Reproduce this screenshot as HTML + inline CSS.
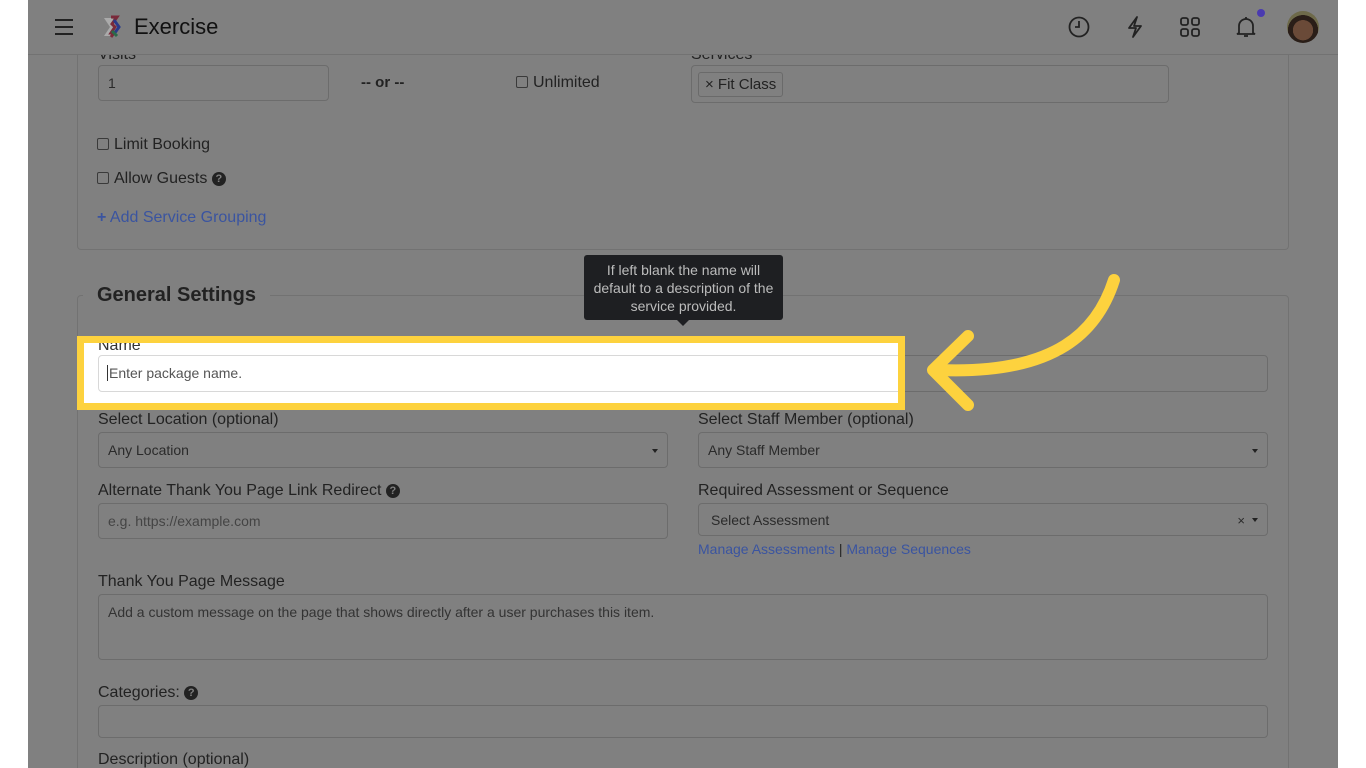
<!DOCTYPE html>
<html><head><style>
*{margin:0;padding:0;box-sizing:border-box}
body{width:1366px;height:768px;background:#fff;position:relative;overflow:hidden;font-family:"Liberation Sans",sans-serif;color:#262626}
.pg{position:absolute;left:28px;top:0;width:1310px;height:768px;background:#808080;overflow:hidden}
.a{position:absolute}
.lbl{position:absolute;font-size:16px;color:#222}
.in{position:absolute;border:1px solid #6c6c6c;border-radius:4px;font-size:14px;color:#2a2a2a;padding-left:9px;display:flex;align-items:center}
.lnk{color:#3a54a0}
.chk{display:inline-block;width:12px;height:12px;border:1px solid #3a3a3a;border-radius:2px;vertical-align:-1px;margin-right:5px}
.q{display:inline-block;width:14px;height:14px;border-radius:50%;background:#222;color:#808080;font-size:11px;font-weight:bold;text-align:center;line-height:14px;vertical-align:1px}
.car{position:absolute;right:9px;top:16px;border-left:3px solid transparent;border-right:3px solid transparent;border-top:4px solid #222}
</style></head><body>
<div class="pg">
 <!-- top panel -->
 <div class="a" style="left:49px;top:30px;width:1212px;height:220px;border:1px solid #727272;border-top:none;border-radius:0 0 4px 4px"></div>
 <div class="lbl" style="left:70px;top:46px">Visits</div>
 <div class="in" style="left:70px;top:65px;width:231px;height:36px">1</div>
 <div class="a" style="left:333px;top:74px;font-size:15px;font-weight:bold;color:#222">-- or --</div>
 <div class="lbl" style="left:488px;top:74px"><span class="chk"></span>Unlimited</div>
 <div class="lbl" style="left:663px;top:46px">Services</div>
 <div class="in" style="left:663px;top:65px;width:478px;height:38px;padding-left:6px"><span style="border:1px solid #6a6a6a;border-radius:3px;padding:3px 6px;font-size:15px;color:#222">× Fit Class</span></div>
 <div class="lbl" style="left:69px;top:136px"><span class="chk"></span>Limit Booking</div>
 <div class="lbl" style="left:69px;top:170px"><span class="chk"></span>Allow Guests <span class="q">?</span></div>
 <div class="lbl lnk" style="left:69px;top:209px"><b>+</b> Add Service Grouping</div>

 <!-- header -->
 <div class="a" style="left:0;top:0;width:1310px;height:55px;border-bottom:1px solid #727272;background:#808080"></div>
 <div class="a" style="left:27px;top:19px;width:18px;height:2px;background:#222;box-shadow:0 7px 0 #222,0 14px 0 #222"></div>
 <svg class="a" style="left:74px;top:15px" width="24" height="24" viewBox="0 0 24 24"><path d="M2 3h8l6 9-6 9H2l6-9z" fill="#aaa"/><path d="M9 2h6l-5 7 3 3-4 6 3 0-3 4" fill="none" stroke="#7a2a3a" stroke-width="3"/><path d="M12 5l5 7-5 7" fill="none" stroke="#2a3a8a" stroke-width="3"/><path d="M10 16l5 5" stroke="#2a6a4a" stroke-width="3"/></svg>
 <div class="a" style="left:106px;top:14px;font-size:22px;color:#111">Exercise</div>
 <svg class="a" style="left:1040px;top:16px" width="22" height="22" viewBox="0 0 22 22" fill="none" stroke="#222" stroke-width="1.8"><circle cx="11" cy="11" r="9.5"/><path d="M11 5v6H7"/></svg>
 <svg class="a" style="left:1096px;top:15px" width="22" height="24" viewBox="0 0 22 24" fill="none" stroke="#222" stroke-width="1.8" stroke-linejoin="round"><path d="M13 2L5 13h7l-3 9 8-11h-7z"/></svg>
 <svg class="a" style="left:1152px;top:17px" width="20" height="20" viewBox="0 0 20 20" fill="none" stroke="#222" stroke-width="1.8"><rect x="1" y="1" width="7" height="7" rx="2"/><rect x="12" y="1" width="7" height="7" rx="2"/><rect x="1" y="12" width="7" height="7" rx="2"/><rect x="12" y="12" width="7" height="7" rx="2"/></svg>
 <svg class="a" style="left:1207px;top:15px" width="22" height="24" viewBox="0 0 22 24" fill="none" stroke="#222" stroke-width="1.8"><path d="M4 18V11a7 7 0 0 1 14 0v7l2 1H2z"/><path d="M9 21h4"/><path d="M11 2v2"/></svg>
 <div class="a" style="left:1229px;top:9px;width:8px;height:8px;border-radius:50%;background:#4a3ab0"></div>
 <div class="a" style="left:1259px;top:11px;width:32px;height:32px;border-radius:50%;background:radial-gradient(circle at 50% 60%,#6a4a38 0 40%,#2a1e18 41% 60%,#6e6a4a 61%)"></div>

 <!-- general settings -->
 <div class="a" style="left:49px;top:295px;width:1212px;height:500px;border:1px solid #727272;border-radius:4px"></div>
 <div class="a" style="left:55px;top:284px;padding:0 14px;background:#808080;font-size:20px;font-weight:bold;color:#222">General Settings</div>
 <div class="in" style="left:70px;top:355px;width:1170px;height:37px"></div>

 <div class="lbl" style="left:70px;top:411px">Select Location (optional)</div>
 <div class="in" style="left:70px;top:432px;width:570px;height:36px">Any Location<span class="car"></span></div>
 <div class="lbl" style="left:670px;top:411px">Select Staff Member (optional)</div>
 <div class="in" style="left:670px;top:432px;width:570px;height:36px">Any Staff Member<span class="car"></span></div>
 <div class="lbl" style="left:70px;top:482px">Alternate Thank You Page Link Redirect <span class="q">?</span></div>
 <div class="in" style="left:70px;top:503px;width:570px;height:36px;color:#444">e.g. https://example.com</div>
 <div class="lbl" style="left:670px;top:482px">Required Assessment or Sequence</div>
 <div class="in" style="left:670px;top:503px;width:570px;height:33px;padding-left:12px">Select Assessment<span class="a" style="right:22px;top:9px;font-size:13px">×</span><span class="car" style="top:14px"></span></div>
 <div class="a lnk" style="left:670px;top:541px;font-size:14px">Manage Assessments <span style="color:#222">|</span> Manage Sequences</div>
 <div class="lbl" style="left:70px;top:573px">Thank You Page Message</div>
 <div class="in" style="left:70px;top:594px;width:1170px;height:66px;align-items:flex-start;padding-top:9px;color:#333">Add a custom message on the page that shows directly after a user purchases this item.</div>
 <div class="lbl" style="left:70px;top:684px">Categories: <span class="q">?</span></div>
 <div class="in" style="left:70px;top:705px;width:1170px;height:33px"></div>
 <div class="lbl" style="left:70px;top:751px">Description (optional)</div>

 <!-- tooltip -->
 <div class="a" style="left:556px;top:255px;width:199px;height:65px;background:#1e1f22;border-radius:3px;color:#bcbcbc;font-size:14px;text-align:center;line-height:18px;padding:6px 8px 0">If left blank the name will default to a description of the service provided.</div>
 <div class="a" style="left:649px;top:320px;border-left:6px solid transparent;border-right:6px solid transparent;border-top:6px solid #1e1f22"></div>

 <!-- highlight -->
 <div class="a" style="left:49px;top:336px;width:828px;height:74px;border:7px solid #fdd23e;background:#fff;overflow:hidden">
  <div class="a" style="left:14px;top:-6px;font-size:16px;color:#333">Name</div>
  <div class="a" style="left:14px;top:12px;width:900px;height:37px;border:1px solid #d8d8d8;border-radius:4px;font-size:14px;color:#555;padding-left:8px;line-height:35px"><span style="border-left:1px solid #333;padding-left:1px">Enter package name.</span></div>
 </div>
 <svg class="a" style="left:890px;top:270px" width="210" height="150" viewBox="0 0 210 150" fill="none" stroke="#fdd23e" stroke-width="12" stroke-linecap="round" stroke-linejoin="round"><path d="M196 10C180 60 140 105 20 100"/><path d="M50 66L15 100L50 135"/></svg>
</div>
</body></html>
